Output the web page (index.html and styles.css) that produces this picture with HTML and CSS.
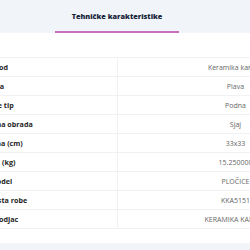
FILE: index.html
```html
<!DOCTYPE html>
<html lang="sr">
<head>
<meta charset="utf-8">
<link rel="stylesheet" href="styles.css">
</head>
<body>
<div class="page">
  <div class="tabs">
    <div class="tab active">Tehničke karakteristike</div>
  </div>
  <table class="specs">
    <tr><th>Proizvod</th><td>Keramika kanjiža</td></tr>
    <tr><th>Nijansa</th><td>Plava</td></tr>
    <tr><th>Pločice tip</th><td>Podna</td></tr>
    <tr><th>Završna obrada</th><td>Sjaj</td></tr>
    <tr><th>Veličina (cm)</th><td>33x33</td></tr>
    <tr><th>Težina (kg)</th><td>15.250000</td></tr>
    <tr><th>Tip model</th><td>PLOČICE</td></tr>
    <tr><th>Podvrsta robe</th><td>KKA5151</td></tr>
    <tr><th>Proizvodjac</th><td>KERAMIKA KANJIŽA</td></tr>
  </table>
  <div class="band"></div>
</div>
</body>
</html>
```

FILE: styles.css
```css
html, body {
  margin: 0;
  padding: 0;
  background: #ffffff;
  overflow: hidden;
}
.page {
  width: 390px;
  margin-left: -37px;
  display: flex;
  flex-direction: column;
  font-family: "Open Sans", "Liberation Sans", sans-serif;
}
.tabs {
  display: flex;
  background: #f1f4f8;
  height: 33px;
  padding-left: 92px;
  box-sizing: border-box;
}
.tab {
  width: 124px;
  box-sizing: border-box;
  text-align: center;
  font-size: 7.3px;
  font-weight: 800;
  color: #17243a;
  line-height: 31px;
  padding-top: 1px;
  height: 33px;
}
.tab.active {
  border-bottom: 2px solid #c96fc0;
}
.specs {
  margin-top: 24px;
  width: 390px;
  border-collapse: collapse;
  table-layout: fixed;
}
.specs tr {
  height: 19px;
}
.specs th, .specs td {
  border-top: 1px solid #f0f1f3;
  border-bottom: 1px solid #f0f1f3;
  padding: 0;
  height: 18px;
  white-space: nowrap;
  overflow: hidden;
}
.specs th {
  width: 154px;
  text-align: left;
  padding-left: 14px;
  font-size: 7.2px;
  font-weight: 700;
  color: #262626;
  border-right: 1px solid #f0f1f3;
  box-sizing: border-box;
}
.specs td {
  width: 236px;
  text-align: center;
  font-size: 7px;
  color: #666666;
}
.band {
  margin-top: 14px;
  height: 20px;
  background: #f1f4f8;
}
```
